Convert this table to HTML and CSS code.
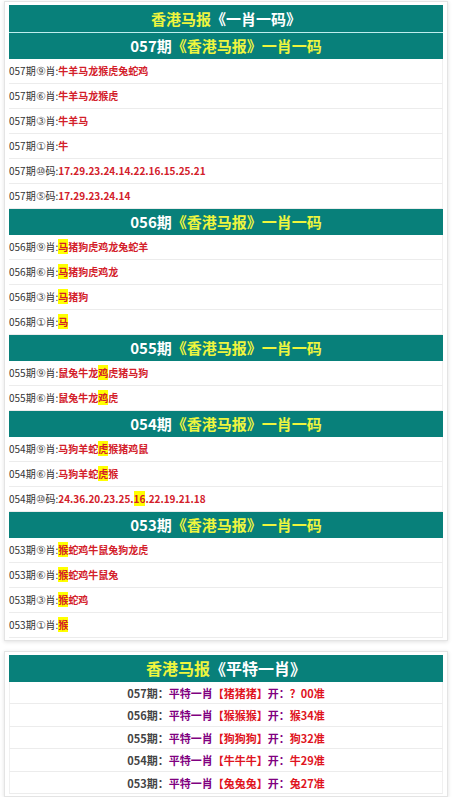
FILE: index.html
```html
<!DOCTYPE html>
<html lang="zh-CN">
<head>
    <meta charset="UTF-8">
    <meta name="viewport" content="width=device-width, initial-scale=1.0">
    <title>香港马报《一肖一码》</title>
    <link rel="stylesheet" href="styles.css">
</head>
<body>
    <div class="box">
        <div class="box-title"><span class="yl">香港马报</span>《一肖一码》</div>

        <div class="issue-head">057期<span class="yl">《香港马报》一肖一码</span></div>
        <div class="row">057期<i>⑨</i>肖:<b>牛羊马龙猴虎兔蛇鸡</b></div>
        <div class="row">057期<i>⑥</i>肖:<b>牛羊马龙猴虎</b></div>
        <div class="row">057期<i>③</i>肖:<b>牛羊马</b></div>
        <div class="row">057期<i>①</i>肖:<b>牛</b></div>
        <div class="row">057期<i>⑩</i>码:<b>17.29.23.24.14.22.16.15.25.21</b></div>
        <div class="row">057期<i>⑤</i>码:<b>17.29.23.24.14</b></div>

        <div class="issue-head">056期<span class="yl">《香港马报》一肖一码</span></div>
        <div class="row">056期<i>⑨</i>肖:<b><mark>马</mark>猪狗虎鸡龙兔蛇羊</b></div>
        <div class="row">056期<i>⑥</i>肖:<b><mark>马</mark>猪狗虎鸡龙</b></div>
        <div class="row">056期<i>③</i>肖:<b><mark>马</mark>猪狗</b></div>
        <div class="row">056期<i>①</i>肖:<b><mark>马</mark></b></div>

        <div class="issue-head">055期<span class="yl">《香港马报》一肖一码</span></div>
        <div class="row">055期<i>⑨</i>肖:<b>鼠兔牛龙<mark>鸡</mark>虎猪马狗</b></div>
        <div class="row">055期<i>⑥</i>肖:<b>鼠兔牛龙<mark>鸡</mark>虎</b></div>

        <div class="issue-head">054期<span class="yl">《香港马报》一肖一码</span></div>
        <div class="row">054期<i>⑨</i>肖:<b>马狗羊蛇<mark>虎</mark>猴猪鸡鼠</b></div>
        <div class="row">054期<i>⑥</i>肖:<b>马狗羊蛇<mark>虎</mark>猴</b></div>
        <div class="row">054期<i>⑩</i>码:<b>24.36.20.23.25.<mark>16</mark>.22.19.21.18</b></div>

        <div class="issue-head">053期<span class="yl">《香港马报》一肖一码</span></div>
        <div class="row">053期<i>⑨</i>肖:<b><mark>猴</mark>蛇鸡牛鼠兔狗龙虎</b></div>
        <div class="row">053期<i>⑥</i>肖:<b><mark>猴</mark>蛇鸡牛鼠兔</b></div>
        <div class="row">053期<i>③</i>肖:<b><mark>猴</mark>蛇鸡</b></div>
        <div class="row">053期<i>①</i>肖:<b><mark>猴</mark></b></div>
    </div>

    <div class="box box-pt">
        <div class="box-title"><span class="yl">香港马报</span>《平特一肖》</div>
        <div class="pt-row">057期：<span class="pp">平特一肖</span><span class="rd">【猪猪猪】</span><span class="pp">开：</span><span class="rd">？00准</span></div>
        <div class="pt-row">056期：<span class="pp">平特一肖</span><span class="rd">【猴猴猴】</span><span class="pp">开：</span><span class="rd">猴34准</span></div>
        <div class="pt-row">055期：<span class="pp">平特一肖</span><span class="rd">【狗狗狗】</span><span class="pp">开：</span><span class="rd">狗32准</span></div>
        <div class="pt-row">054期：<span class="pp">平特一肖</span><span class="rd">【牛牛牛】</span><span class="pp">开：</span><span class="rd">牛29准</span></div>
        <div class="pt-row">053期：<span class="pp">平特一肖</span><span class="rd">【兔兔兔】</span><span class="pp">开：</span><span class="rd">兔27准</span></div>
    </div>
</body>
</html>
```

FILE: styles.css
```css
body {
    font-family: "Noto Sans CJK SC", sans-serif;
    background-color: #ffffff;
    margin: 0;
    padding: 1px 5px 0 4px;
}

.box {
    border: 1px solid #e4e4e4;
    box-shadow: 0px 1px 4px rgba(0, 0, 0, 0.12);
    padding: 3px 4px 2px 4px;
    background-color: #fff;
}

.box-pt {
    margin-top: 10px;
}

.box-title {
    height: 28px;
    line-height: 27px;
    background-color: #08807a;
    border-bottom: 1px solid #bfeeee;
    box-sizing: border-box;
    color: #ffffff;
    font-size: 15px;
    font-weight: bold;
    text-align: center;
}

.box-pt .box-title {
    height: 27px;
    border-bottom: none;
    font-size: 16px;
}

.yl {
    color: #eef53e;
}

.issue-head {
    height: 26px;
    line-height: 26px;
    background-color: #08807a;
    color: #ffffff;
    font-size: 15px;
    font-weight: bold;
    text-align: center;
}

.row {
    height: 25px;
    line-height: 24px;
    border-bottom: 1px solid #ececec;
    border-right: 1px solid #f0f0f0;
    box-sizing: border-box;
    font-size: 10px;
    color: #333333;
    white-space: nowrap;
}

.row i {
    font-family: "DejaVu Sans", sans-serif;
    font-style: normal;
    font-size: 11px;
    color: #555555;
}

.row b {
    color: #d3202a;
}

mark {
    background-color: #ffff00;
    color: #d3202a;
}

.pt-row {
    height: 22.4px;
    line-height: 22px;
    border-bottom: 1px solid #ececec;
    border-left: 1px solid #f0f0f0;
    border-right: 1px solid #f0f0f0;
    box-sizing: border-box;
    font-size: 11px;
    font-weight: bold;
    color: #444444;
    text-align: center;
}

.pp {
    color: #800080;
}

.rd {
    color: #e0141e;
}
```
